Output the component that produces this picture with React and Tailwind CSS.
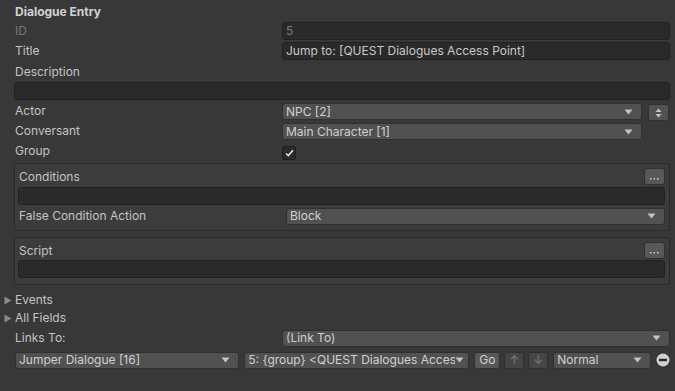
import React from "react";

const Arrow = () => (
  <svg width="9" height="6" viewBox="0 0 9 6" className="shrink-0">
    <path d="M0.5 0.5 H8.5 L4.5 5.5 Z" fill="#c4c4c4" />
  </svg>
);

function Field({ children, className = "", dim = false }) {
  return (
    <div
      className={`h-[18px] flex items-center px-[3px] rounded-[3px] bg-[#2a2a2a] border border-[#212121] ${dim ? "text-[#7a7a7a]" : "text-[#c8c8c8]"} ${className}`}
    >
      <span className="truncate whitespace-nowrap">{children}</span>
    </div>
  );
}

function Dropdown({ children, className = "", clip = false }) {
  return (
    <div
      className={`h-[17px] flex items-center pl-[3px] rounded-[3px] bg-[#515151] border border-[#303030] text-[#d0d0d0] ${clip ? "pr-[4px]" : "pr-[8px]"} ${className}`}
    >
      <span className={`flex-1 min-w-0 whitespace-nowrap overflow-hidden ${clip ? "text-clip" : "truncate"}`}>{children}</span>
      <Arrow />
    </div>
  );
}

function Label({ children, className = "" }) {
  return <div className={`w-[268px] shrink-0 pl-[1px] whitespace-nowrap ${className}`}>{children}</div>;
}

function DotsButton() {
  return (
    <div className="w-[21px] h-[17px] rounded-[3px] bg-[#585858] border border-[#303030] flex items-end justify-center pb-[4px] shrink-0">
      <svg width="9" height="2" viewBox="0 0 9 2">
        <rect x="0" y="0" width="1.5" height="1.5" fill="#d0d0d0" />
        <rect x="3.5" y="0" width="1.5" height="1.5" fill="#d0d0d0" />
        <rect x="7" y="0" width="1.5" height="1.5" fill="#d0d0d0" />
      </svg>
    </div>
  );
}

function Foldout({ children }) {
  return (
    <div className="h-[18px] flex items-center -ml-[11px]">
      <svg width="8" height="9" viewBox="0 0 8 9" className="mr-[3px]">
        <path d="M0.5 0.5 L7.5 4.5 L0.5 8.5 Z" fill="#8a8a8a" />
      </svg>
      <span>{children}</span>
    </div>
  );
}

export default function App() {
  return (
    <div
      className="w-[675px] h-[391px] bg-[#383838] text-[#c4c4c4] text-[12px] leading-[14px] pl-[14px] pr-[5px] pt-[2px] overflow-hidden"
      style={{ fontFamily: "Inter, 'Noto Sans', sans-serif" }}
    >
      <div className="h-[20px] flex items-center pl-[1px] font-bold text-[#d2d2d2]">Dialogue Entry</div>

      <div className="flex items-center h-[18px]">
        <Label className="text-[#7a7a7a]">ID</Label>
        <Field dim className="flex-1">5</Field>
      </div>

      <div className="flex items-center h-[18px] mt-[2px]">
        <Label>Title</Label>
        <Field className="flex-1">Jump to: [QUEST Dialogues Access Point]</Field>
      </div>

      <div className="h-[20px] mt-[2px] flex items-center pl-[1px]">Description</div>
      <Field className="w-full" />

      <div className="flex items-center h-[18px] mt-[2px]">
        <Label>Actor</Label>
        <Dropdown className="w-[360px] mt-[1px]">NPC [2]</Dropdown>
        <div className="ml-[6px] mt-[3px] w-[21px] h-[17px] rounded-[3px] bg-[#515151] border border-[#303030] flex items-center justify-center">
          <svg width="7" height="10" viewBox="0 0 7 10">
            <path d="M0.5 4 L3.5 0.5 L6.5 4 Z" fill="#c4c4c4" />
            <path d="M0.5 6 L3.5 9.5 L6.5 6 Z" fill="#c4c4c4" />
          </svg>
        </div>
      </div>

      <div className="flex items-center h-[18px] mt-[2px]">
        <Label>Conversant</Label>
        <Dropdown className="w-[360px] mt-[1px]">Main Character [1]</Dropdown>
      </div>

      <div className="flex items-center h-[18px] mt-[2px]">
        <Label>Group</Label>
        <div className="w-[14px] h-[14px] mt-[3px] rounded-[2px] bg-[#2a2a2a] border border-[#1f1f1f] flex items-center justify-center">
          <svg width="9" height="8" viewBox="0 0 9 8">
            <path d="M1 4.5 L3.3 6.6 L8 1.2" stroke="#e6e6e6" strokeWidth="1.5" fill="none" />
          </svg>
        </div>
      </div>

      <div className="mt-[3px] h-[68px] rounded-[3px] border border-[#2a2a2a] bg-[#3c3c3c] pl-[3px] pr-[4px] pt-[4px]">
        <div className="flex items-center justify-between h-[17px]">
          <span className="pl-[1px]">Conditions</span>
          <DotsButton />
        </div>
        <Field className="w-full mt-[2px]" />
        <div className="flex items-center h-[18px] mt-[2px]">
          <Label className="w-[268px]">False Condition Action</Label>
          <Dropdown className="flex-1">Block</Dropdown>
        </div>
      </div>

      <div className="mt-[6px] h-[48px] rounded-[3px] border border-[#2a2a2a] bg-[#3c3c3c] pl-[3px] pr-[4px] pt-[4px]">
        <div className="flex items-center justify-between h-[17px]">
          <span className="pl-[1px]">Script</span>
          <DotsButton />
        </div>
        <Field className="w-full mt-[1px]" />
      </div>

      <div className="mt-[6px] pl-[1px]">
        <Foldout>Events</Foldout>
        <Foldout>All Fields</Foldout>
      </div>

      <div className="flex items-center h-[18px] mt-[2px]">
        <Label>Links To:</Label>
        <Dropdown className="flex-1">(Link To)</Dropdown>
      </div>

      <div className="flex items-center h-[18px] mt-[4px]">
        <Dropdown className="w-[225px] ml-[1px]">Jumper Dialogue [16]</Dropdown>
        <Dropdown clip className="w-[225px] ml-[5px]">5: {"{group}"} &lt;QUEST Dialogues Access</Dropdown>
        <div className="ml-[5px] w-[26px] h-[17px] shrink-0 rounded-[3px] bg-[#585858] border border-[#303030] flex items-center justify-center text-[#d0d0d0]">
          Go
        </div>
        <div className="ml-[4px] w-[20px] h-[17px] shrink-0 rounded-[3px] bg-[#464646] border border-[#303030] flex items-center justify-center text-[#7c7c7c]">
          ↑
        </div>
        <div className="ml-[4px] w-[20px] h-[17px] shrink-0 rounded-[3px] bg-[#464646] border border-[#303030] flex items-center justify-center text-[#7c7c7c]">
          ↓
        </div>
        <Dropdown className="ml-[5px] w-[98px]">Normal</Dropdown>
        <svg width="14" height="14" viewBox="0 0 14 14" className="ml-[5px] shrink-0">
          <circle cx="7" cy="7" r="6.5" fill="#d0d0d0" />
          <rect x="3" y="5.8" width="8" height="2.4" fill="#2a2a2a" />
        </svg>
      </div>
    </div>
  );
}
